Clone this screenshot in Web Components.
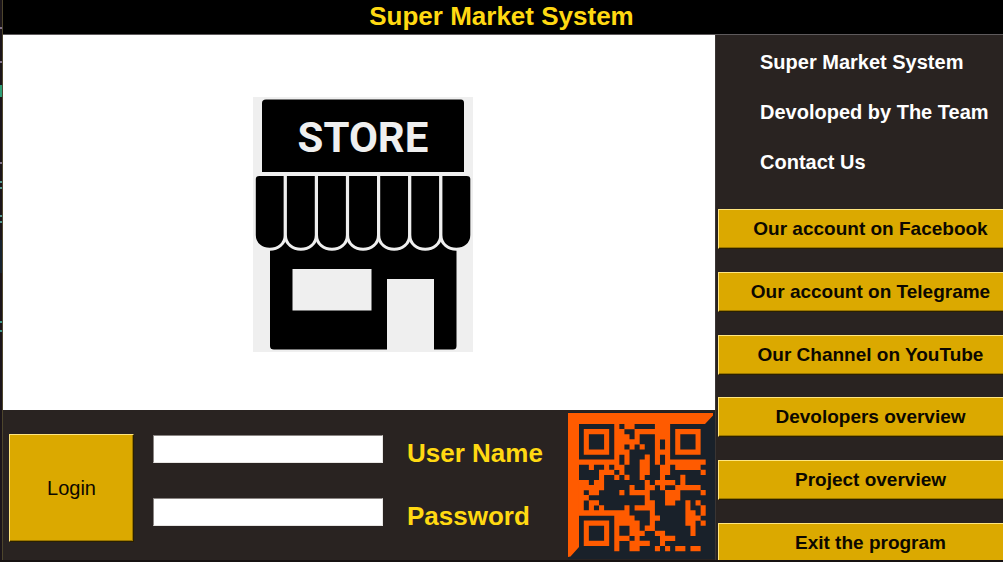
<!DOCTYPE html>
<html lang="en">
<head>
<meta charset="utf-8">
<title>Super Market System</title>
<style>
html, body { margin: 0; height: 100%; }
body { font-family: "Liberation Sans", Arial, sans-serif; background: #1b151a; overflow: hidden; }
</style>
</head>
<body>
<market-app></market-app>
<script>
const define = (name, html, setup) => {
  const template = document.createElement('template');
  template.innerHTML = html;
  customElements.define(name, class extends HTMLElement {
    constructor() {
      super();
      this.attachShadow({ mode: 'open' }).append(template.content.cloneNode(true));
    }
    connectedCallback() { if (setup) setup(this, this.shadowRoot); }
  });
};

define('gold-button', `
<style>
:host { display: block; }
button { display: block; box-sizing: border-box; width: 100%; height: 100%; margin: 0; padding: 0; background: #dba900;
  border: 1px solid; border-color: #ffe680 #2b2000 #2b2000 #ffe680; box-shadow: inset -1px -1px #9c7800;
  color: #0c0800; font: inherit; cursor: pointer; white-space: nowrap; }
</style>
<button type="button"><slot></slot></button>`);

define('title-bar', `
<style>
:host { display: block; background: #000; border-bottom: 1px solid #5e5a5c; }
h1 { margin: 0; padding: 0 3px 2px 0; font-size: 26px; line-height: 32px; font-weight: bold; text-align: center; color: #ffd912; }
</style>
<h1><slot></slot></h1>`);

define('store-picture', `
<style>
:host { display: block; width: 220px; height: 255px; }
svg { display: block; width: 100%; height: 100%; }
text { font: bold 42px Roboto, sans-serif; }
</style>
<svg viewBox="0 0 220 255" role="img" aria-label="Store">
  <rect width="220" height="255" fill="#efefef"/>
  <path d="M13 2.5H208Q211 2.5 211 6V75H9V6Q9 2.500 13 2.500Z"/>
  <text x="110" y="55" text-anchor="middle" fill="#efefef">STORE</text>
  <path d="M17 125H203.500V249Q203.500 252.500 200 252.500H181V182H134V252.500H21Q17 252.500 17 249Z"/>
  <rect x="39.500" y="172" width="79" height="41.500" fill="#efefef"/>
  <g class="awning" stroke="#efefef" stroke-width="3"></g>
</svg>`, (el, root) => {
  const awning = root.querySelector('.awning');
  for (let i = 0; i < 7; i++) {
    const x = 1.3 + i * 31.1;
    const p = document.createElementNS('http://www.w3.org/2000/svg', 'path');
    const r = x + 30.9;
    const left = i === 0 ? `M${x} 82Q${x} 77.500 ${x + 5} 77.500` : `M${x} 77.500`;
    const right = i === 6 ? `H${r - 5}Q${r} 77.500 ${r} 82` : `H${r}`;
    p.setAttribute('d', `${left}${right}V138C${r} 157 ${x} 157 ${x} 138Z`);
    awning.append(p);
  }
});

define('qr-code', `
<style>
:host { display: block; width: 147px; height: 147px; }
svg { display: block; width: 100%; height: 100%; }
</style>
<svg viewBox="0 0 147 147" role="img" aria-label="QR code">
  <rect width="147" height="147" fill="#19212a"/>
  <path fill="#ff5b00" d="M0 1H145V3.500L137 12H11V135L2.500 144.500L0 145Z"/>
  <path class="cells" fill="#ff5b00" transform="translate(10.700 12) scale(5.080)"/>
</svg>`, (el, root) => {
  const rows = [
    '.......#.##....###.......',
    '.#####.##..#######.#####.',
    '.#...#.###.#...###.#...#.',
    '.#...#.#####...#.#.#...#.',
    '.#...#.##.#.#..#.#.#...#.',
    '.#####.###.....###.#####.',
    '.......#.#...#.#.#.......',
    '########.#..##.#.########',
    '..#..#.##...##..##.#####.',
    '....###.#...##..##......#',
    '....#..#.#..#...#...#....',
    '##.##........#.####.#....',
    '#####.....#..##.#..#####.',
    '#.##....#.####...###....#',
    '##...........#...###.....',
    '#.##.........##..##..#.#.',
    '#.#.#....#.####......#..#',
    '##########....#......##.#',
    '.......####...##.....###.',
    '.#####.#####..#......##.#',
    '.#...#.#..##.##.......#..',
    '.#...#.#..###..##.....#..',
    '.#...#.###.#....###......',
    '.#####.#..####..#........',
    '.......#..##...#.#.##.##.'
  ];
  let d = '';
  rows.forEach((row, y) => {
    for (const run of row.matchAll(/#+/g)) {
      const n = run[0].length;
      d += `M${run.index} ${y}h${n}v1.04h${-n}z`;
    }
  });
  root.querySelector('.cells').setAttribute('d', d);
});

define('login-panel', `
<style>
:host { display: flex; justify-content: space-between; background: #292321; height: 150px; }
form { display: flex; padding: 24px 0 0 6px; gap: 19px; }
gold-button { width: 125px; height: 108px; font-size: 20px; }
.fields { display: grid; grid-template-columns: 230px auto; grid-auto-rows: 36px; column-gap: 24px; row-gap: 27px; align-items: start; padding-top: 1px; }
input { box-sizing: border-box; width: 100%; height: 28px; margin: 0; padding: 0 4px; border: 1px solid; border-color: #8a8583 #e8e6e4 #e8e6e4 #8a8583; border-radius: 0; background: #fff; font: 20px "Liberation Sans", Arial, sans-serif; }
label { padding-top: 4px; font-size: 26px; line-height: 28px; font-weight: bold; color: #ffd912; white-space: nowrap; }
qr-code { margin-top: 2px; }
</style>
<form>
  <gold-button>Login</gold-button>
  <div class="fields">
    <input id="user" type="text" autocomplete="off"><label for="user">User Name</label>
    <input id="pass" type="password" autocomplete="off"><label for="pass">Password</label>
  </div>
</form>
<qr-code></qr-code>`);

define('side-panel', `
<style>
:host { display: flex; flex-direction: column; box-sizing: border-box; background: #292321; border-left: 1px solid #3a3533; overflow: hidden; min-height: 0; }
.about { padding: 2px 0 0 44px; }
p { margin: 0; font-size: 20px; line-height: 50px; font-weight: bold; color: #fff; white-space: nowrap; }
nav { flex: 1; display: flex; flex-direction: column; justify-content: space-between; margin: 22px -20px -3px 2px; }
gold-button { height: 40px; font-size: 19px; font-weight: bold; }
</style>
<div class="about"><p>Super Market System</p><p>Devoloped by The Team</p><p>Contact Us</p></div>
<nav>
  <gold-button>Our account on Facebook</gold-button>
  <gold-button>Our account on Telegrame</gold-button>
  <gold-button>Our Channel on YouTube</gold-button>
  <gold-button>Devolopers overview</gold-button>
  <gold-button>Project overview</gold-button>
  <gold-button>Exit the program</gold-button>
</nav>`);

define('market-app', `
<style>
:host { display: grid; grid-template: auto minmax(0, 1fr) / minmax(0, 1fr) 288px; box-sizing: border-box; height: 100vh;
  padding-left: 3px; border-bottom: 2px solid #171211;
  background:
    linear-gradient(#1b151a 27px, #84748c 27px 29px, #1b151a 29px 61px, #84748c 61px 63px, #1b151a 63px 85px,
      #2f9f78 85px 97px, #1b151a 97px 162px, #84748c 162px 164px, #1b151a 164px 181px, #55988e 181px 183px,
      #1b151a 183px 187px, #55988e 187px 189px, #1b151a 189px 215px, #55988e 215px 217px, #1b151a 217px 221px,
      #55988e 221px 223px, #1b151a 223px 240px, #16222f 240px 273px, #1b151a 273px 321px, #3f9688 321px 323px,
      #1b151a 323px 330px, #3f9688 330px 332px, #1b151a 332px) 0 0 / 2px 100% no-repeat,
    #4d452c; }
title-bar { grid-column: 1 / 3; }
main { display: flex; flex-direction: column; min-height: 0; }
.stage { flex: 1; display: flex; align-items: center; justify-content: center; padding: 4px 0 0 7px; background: #fff; }
</style>
<title-bar>Super Market System</title-bar>
<main>
  <div class="stage"><store-picture></store-picture></div>
  <login-panel></login-panel>
</main>
<side-panel></side-panel>`);
</script>
</body>
</html>
